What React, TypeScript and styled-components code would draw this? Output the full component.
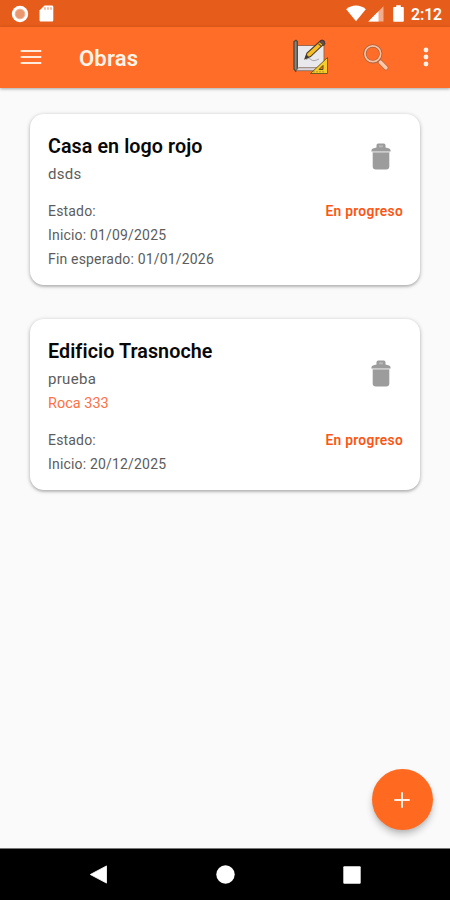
import React from "react";
import styled, { createGlobalStyle } from "styled-components";

const GlobalStyle = createGlobalStyle`
  * { box-sizing: border-box; }
  body { margin: 0; background: #fafafa; font-family: Roboto, sans-serif; }
`;

const Screen = styled.div`
  width: 450px;
  height: 900px;
  display: flex;
  flex-direction: column;
  background: #fafafa;
  overflow: hidden;
`;

const StatusBar = styled.header`
  height: 27px;
  flex: none;
  display: flex;
  align-items: center;
  justify-content: space-between;
  padding: 0 8px 0 11px;
  background: #e65c1a;
  color: #fff;
`;

const StatusGroup = styled.div<{ $gap: number }>`
  display: flex;
  align-items: center;
  gap: ${(p) => p.$gap}px;
`;

const Clock = styled.span`
  width: 31px;
  font-size: 15.8px;
  line-height: 27px;
  font-weight: 600;
  letter-spacing: -0.1px;
  white-space: nowrap;
  padding-top: 1px;
`;

const AppBar = styled.nav`
  height: 61px;
  flex: none;
  display: flex;
  align-items: center;
  padding: 0 21px 0 20px;
  background: #ff6d28;
  box-shadow: 0 1px 3px rgba(0, 0, 0, 0.35);
  z-index: 1;
`;

const IconButton = styled.button`
  display: flex;
  padding: 0;
  border: 0;
  background: none;
  cursor: pointer;
`;

const MenuButton = styled(IconButton)`
  padding-bottom: 2px;
`;

const PageTitle = styled.h1`
  flex: 1;
  margin: 2px 0 0 37px;
  font-size: 22px;
  line-height: 30px;
  font-weight: 600;
  letter-spacing: 0.2px;
  color: #fff3e8;
`;

const Actions = styled.div`
  display: flex;
  align-items: center;
  padding-bottom: 1px;
`;

const SearchButton = styled(IconButton)`
  margin: 0 34px 0 33px;
`;

const Content = styled.main`
  flex: 1;
  display: flex;
  flex-direction: column;
  gap: 34px;
  padding: 26px 30px 18px;
`;

const Card = styled.article`
  padding: 19px 17px 14px 18px;
  border-radius: 14px;
  background: #fff;
  box-shadow: 0 1px 4px rgba(0, 0, 0, 0.28), 0 2px 2px rgba(0, 0, 0, 0.1);
`;

const CardHeader = styled.div`
  display: flex;
  align-items: center;
  justify-content: space-between;
  padding-right: 12px;
  margin-bottom: 14px;
`;

const CardTitle = styled.h2`
  margin: 0 0 2px;
  font-size: 19.7px;
  line-height: 27px;
  font-weight: 600;
  letter-spacing: 0.08px;
  color: #080808;
`;

const Line = styled.p`
  margin: 0;
  font-size: 15px;
  line-height: 24px;
  letter-spacing: 0.3px;
  color: #5c5c5c;
`;

const Address = styled(Line)`
  padding-top: 1px;
  margin-bottom: -1.5px;
  font-size: 14.5px;
  letter-spacing: 0;
  color: #ff7043;
`;

const DeleteButton = styled(IconButton)`
  padding-bottom: 6px;
`;

const Meta = styled.div`
  display: flex;
  justify-content: space-between;
  font-size: 14px;
  line-height: 23.8px;
  letter-spacing: 0.18px;
  color: #5c5c5c;
`;

const Status = styled.strong`
  font-size: 13.8px;
  font-weight: 600;
  letter-spacing: 0.3px;
  color: #fb5615;
`;

const Fab = styled.button`
  display: flex;
  align-items: center;
  justify-content: center;
  align-self: flex-end;
  width: 61px;
  height: 61px;
  margin: auto -13px 0 0;
  padding: 0 1px 0 0;
  border: 0;
  border-radius: 50%;
  background: #ff6a20;
  box-shadow: 0 5px 7px rgba(0, 0, 0, 0.2), 0 2px 3px rgba(0, 0, 0, 0.08);
`;

const SystemNav = styled.footer`
  height: 52px;
  flex: none;
  display: grid;
  grid-template-columns: repeat(3, 127px);
  justify-content: center;
  align-items: center;
  justify-items: center;
  background: #000;
  border-top: 1px solid #777;
`;

const BatteryClock = styled.div`
  display: flex;
  align-items: center;
  gap: 7px;
  margin-left: 9px;
`;

const CameraDot = () => (
  <svg width="18" height="18" viewBox="0 0 18 18">
    <circle cx="9" cy="9" r="8.2" fill="#fff" />
    <circle cx="9" cy="9" r="4.8" fill="#e9986f" stroke="#efb193" />
  </svg>
);

const SdCard = () => (
  <svg width="15" height="17" viewBox="0 0 15 17">
    <path d="M5.5.5h7.3c1 0 1.5.5 1.5 1.5v13c0 1-.5 1.5-1.5 1.5H2C1 16.5.5 16 .5 15V5.500z" fill="#fff" />
    <path d="M6 2.200v2.500M9 2.200v2.500M12 2.200v2.500" stroke="#e9a07c" strokeWidth="1.300" />
  </svg>
);

const Wifi = () => (
  <svg width="20" height="17" viewBox="0 0 20 17">
    <path d="M.2 4.200C5.700-.6 14.300-.6 19.800 4.200L10 16.300z" fill="#fff" />
  </svg>
);

const Signal = () => (
  <svg width="16" height="16" viewBox="0 0 16 16">
    <path d="M15.500.3v15.200H.3z" fill="#f3ad8b" />
    <path d="M10.500 5.300v10.200H.3z" fill="#fff" />
  </svg>
);

const Battery = () => (
  <svg width="11" height="17" viewBox="0 0 11 17">
    <path d="M3.200.3h4.600v1.700H10c.5 0 .8.3.8.8v12.900c0 .6-.4 1-1 1H1.200c-.6 0-1-.4-1-1V2.800c0-.5.3-.8.8-.8h2.200z" fill="#fff" />
  </svg>
);

const MenuIcon = () => (
  <svg width="22" height="16" viewBox="0 0 22 16">
    <path d="M.7 2h20.600M.7 8h20.600M.7 14h20.600" stroke="#ffebdc" strokeWidth="2" />
  </svg>
);

const BlueprintIcon = () => (
  <svg width="38" height="38" viewBox="0 0 38 38">
    <path d="M4.500 7.500H32V31L30 32.200H5z" fill="#e9e9ed" stroke="#94614a" strokeWidth=".9" />
    <path d="M2 3.500l2-1.200 1.300 1.200v28l-1.600 1.700L2 31z" fill="#85877f" stroke="#4b493d" strokeWidth="1.300" />
    <path d="M4 32.700l2.500-3H30v3z" fill="#d7d7df" stroke="#866353" strokeWidth=".8" />
    <path d="M14 21.500q3-2.500 5 0t8-.5" fill="none" stroke="#a5a5ac" />
    <path d="M13 20.800l2-5.800L28.800 2.500q4-1.200 3.700 2.800L18.500 18.600z" fill="#f5bd26" stroke="#4b3c25" strokeWidth="1.100" />
    <path d="M28 3.200q2-2.400 4 0t0 4.400l-4-3.300z" fill="#6b4b49" stroke="#333" strokeWidth=".7" />
    <path d="M13 20.800l1.400-4.400 2.800 2.900z" fill="#383936" />
    <path d="M26.500 5.700l3.500 3.200" stroke="#735329" strokeWidth="1.200" />
    <path d="M35.500 19.500v16H18.500z" fill="#f5cc2a" stroke="#745d19" strokeWidth="1" strokeLinejoin="round" />
    <path d="M31 27.500v4h-4z" fill="#ef7e25" stroke="#574817" />
    <path d="M22 34.500V33M25 34.500V33M28 34.500V33M31 34.500V33" stroke="#a0811f" />
  </svg>
);

const SearchIcon = () => (
  <svg width="26" height="27" viewBox="0 0 26 27">
    <path d="M15.800 16.500l7.200 7.300" stroke="#b96a45" strokeWidth="5" strokeLinecap="round" />
    <path d="M17.500 18.200l5.400 5.500" stroke="#ffc9a8" strokeWidth="3.600" strokeLinecap="round" />
    <circle cx="9.800" cy="9.800" r="8" fill="none" stroke="#a8603c" strokeWidth="3.200" />
    <circle cx="9.800" cy="9.800" r="7.900" fill="none" stroke="#f5c2a3" strokeWidth="1.700" />
  </svg>
);

const MoreIcon = () => (
  <svg width="6" height="20" viewBox="0 0 6 20">
    <g fill="#fff0e5">
      <circle cx="3" cy="3" r="2.400" />
      <circle cx="3" cy="10" r="2.400" />
      <circle cx="3" cy="17" r="2.400" />
    </g>
  </svg>
);

const TrashIcon = () => (
  <svg width="20" height="27" viewBox="0 0 20 27">
    <path d="M5.500 4.500V2.200Q5.500.5 7.200.5h5.600q1.700 0 1.700 1.700v2.300l3.700.9q1.500.6 1.500 3.200H.3q0-2.600 1.500-3.200z" fill="#9c9c9c" />
    <path d="M8 2.300h4v2H8z" fill="#b8b8b8" />
    <path d="M1.700 9.500h16.600V23.500q0 3-3.200 3H4.900q-3.200 0-3.200-3z" fill="#9c9c9c" />
    <path d="M1.700 9.300h16.600" stroke="#bcbcbc" />
  </svg>
);

const PlusIcon = () => (
  <svg width="16" height="16" viewBox="0 0 16 16">
    <path d="M8 .3v15.400M.3 8h15.400" stroke="#fff0e6" strokeWidth="2" />
  </svg>
);

const BackIcon = () => (
  <svg width="18" height="19" viewBox="0 0 18 19">
    <path d="M1.300 9.500L17.500.9v17.200z" fill="#fff" stroke="#fff" strokeWidth=".8" strokeLinejoin="round" />
  </svg>
);

const HomeIcon = () => (
  <svg width="19" height="19" viewBox="0 0 19 19">
    <circle cx="9.500" cy="9.500" r="9.200" fill="#fff" />
  </svg>
);

const RecentsIcon = () => (
  <svg width="18" height="18" viewBox="0 0 18 18">
    <rect x=".3" y=".3" width="17.400" height="17.400" rx="1" fill="#fff" />
  </svg>
);

interface Work {
  name: string;
  description: string;
  address?: string;
  status: string;
  dates: string[];
}

const works: Work[] = [
  {
    name: "Casa en logo rojo",
    description: "dsds",
    status: "En progreso",
    dates: ["Inicio: 01/09/2025", "Fin esperado: 01/01/2026"],
  },
  {
    name: "Edificio Trasnoche",
    description: "prueba",
    address: "Roca 333",
    status: "En progreso",
    dates: ["Inicio: 20/12/2025"],
  },
];

const WorkCard = ({ work }: { work: Work }) => (
  <Card>
    <CardHeader>
      <div>
        <CardTitle>{work.name}</CardTitle>
        <Line>{work.description}</Line>
        {work.address && <Address>{work.address}</Address>}
      </div>
      <DeleteButton aria-label="Eliminar">
        <TrashIcon />
      </DeleteButton>
    </CardHeader>
    <Meta>
      <span>Estado:</span>
      <Status>{work.status}</Status>
    </Meta>
    {work.dates.map((date) => (
      <Meta key={date}>{date}</Meta>
    ))}
  </Card>
);

export default function App() {
  return (
    <Screen>
      <GlobalStyle />
      <StatusBar>
        <StatusGroup $gap={10}>
          <CameraDot />
          <SdCard />
        </StatusGroup>
        <StatusGroup $gap={0}>
          <StatusGroup $gap={2}>
            <Wifi />
            <Signal />
          </StatusGroup>
          <BatteryClock>
            <Battery />
            <Clock>2:12</Clock>
          </BatteryClock>
        </StatusGroup>
      </StatusBar>
      <AppBar>
        <MenuButton aria-label="Menú">
          <MenuIcon />
        </MenuButton>
        <PageTitle>Obras</PageTitle>
        <Actions>
          <IconButton aria-label="Planos">
            <BlueprintIcon />
          </IconButton>
          <SearchButton aria-label="Buscar">
            <SearchIcon />
          </SearchButton>
          <IconButton aria-label="Más opciones">
            <MoreIcon />
          </IconButton>
        </Actions>
      </AppBar>
      <Content>
        {works.map((work) => (
          <WorkCard key={work.name} work={work} />
        ))}
        <Fab aria-label="Agregar obra">
          <PlusIcon />
        </Fab>
      </Content>
      <SystemNav>
        <BackIcon />
        <HomeIcon />
        <RecentsIcon />
      </SystemNav>
    </Screen>
  );
}
